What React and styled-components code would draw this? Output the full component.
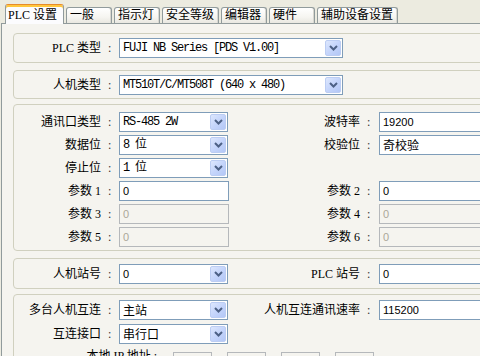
import React from "react";
import styled, { createGlobalStyle } from "styled-components";

const GlobalStyle = createGlobalStyle`
  html, body { margin: 0; padding: 0; background: #ECE9D8; }
  * { box-sizing: border-box; }
`;

const LABEL_FONT = `"Liberation Serif", "Noto Sans CJK SC", serif`;
const MONO_FONT = `"Liberation Mono", "Noto Sans CJK SC", monospace`;
const SANS_FONT = `"Liberation Sans", "Noto Sans CJK SC", sans-serif`;
const CJK_FONT = `"Noto Sans CJK SC", sans-serif`;

const Window = styled.div`
  width: 480px;
  height: 356px;
  overflow: hidden;
  background: #ecebe0;
  font-family: ${LABEL_FONT};
  font-size: 12px;
  color: #000;
  display: flex;
  flex-direction: column;
`;

const TabStrip = styled.div`
  display: flex;
  align-items: flex-end;
  height: 23px;
  padding-left: 5px;
  flex-shrink: 0;
`;

const Tab = styled.div`
  position: relative;
  z-index: ${(p) => (p.$active ? 2 : 1)};
  height: ${(p) => (p.$active ? "20px" : "16px")};
  margin-bottom: ${(p) => (p.$active ? "-1px" : "0")};
  margin-left: ${(p) => (p.$active ? "0" : "2px")};
  min-width: ${(p) => (p.$active ? "59px" : "46px")};
  padding: 0 4px 0 ${(p) => (p.$active ? "2px" : "3px")};
  border: 1px solid #919b9c;
  border-bottom: none;
  border-radius: 3px 3px 0 0;
  border-top-color: ${(p) => (p.$active ? "#e68b2c" : "#919b9c")};
  box-shadow: ${(p) => (p.$active ? "inset 0 2px 0 #ffc73c" : "inset -1px 0 0 #d8d7d0")};
  background: ${(p) =>
    p.$active ? "#fcfcfe" : "linear-gradient(#ffffff, #f6f5f1 60%, #e9e8e1)"};
  line-height: ${(p) => (p.$active ? "20px" : "15px")};
  white-space: nowrap;
  &:first-child {
    margin-left: 0;
  }
`;

const Pane = styled.div`
  flex: 1;
  margin-left: 1px;
  border-top: 1px solid #919b9c;
  border-left: 1px solid #919b9c;
  background: #f5f4ef;
  display: flex;
  flex-direction: column;
  padding: 9px 0 0 11px;
`;

const Group = styled.div`
  width: 520px;
  flex-shrink: 0;
  margin-top: ${(p) => p.$mt || 0}px;
  border: 1px solid #d0d0bf;
  border-radius: 4px;
  padding: ${(p) => p.$pad || "4px 0"};
  display: flex;
  flex-direction: column;
  gap: ${(p) => p.$gap || 3}px;
`;

const Row = styled.div`
  display: grid;
  grid-template-columns: 87px 18px 110px 131px 19px 130px;
  height: 20px;
  align-items: center;
`;

const Label = styled.span`
  text-align: right;
  white-space: nowrap;
  line-height: 20px;
`;

const Colon = styled.span`
  padding-left: 7px;
  color: #333;
  line-height: 20px;
`;

const valueFont = {
  mono: `font-family: ${MONO_FONT}; font-size: 12px; letter-spacing: -1.2px;`,
  sans: `font-family: ${SANS_FONT}; font-size: 11px;`,
  cjk: `font-family: ${CJK_FONT}; font-size: 12px;`,
};

const SelectBox = styled.div`
  width: ${(p) => p.$w || 109}px;
  height: 20px;
  background: #fff;
  border: 1px solid #7f9db9;
  display: flex;
  padding: 1px;
`;

const Value = styled.span`
  flex: 1;
  padding-left: 2px;
  line-height: 16px;
  white-space: nowrap;
  overflow: hidden;
  ${(p) => valueFont[p.$kind || "mono"]}
`;

const ArrowButton = styled.span`
  width: 16px;
  flex-shrink: 0;
  display: flex;
  align-items: center;
  justify-content: center;
  border: 1px solid #bccdf3;
  border-radius: 2px;
  background: linear-gradient(135deg, #dde7fd 0%, #c5d5fb 50%, #b3c7f6 100%);
`;

const InputBox = styled.div`
  width: ${(p) => p.$w || 110}px;
  height: 20px;
  border: 1px solid ${(p) => (p.$disabled ? "#b5b8bb" : "#7f9db9")};
  background: ${(p) => (p.$disabled ? "#f5f4ef" : "#fff")};
  color: ${(p) => (p.$disabled ? "#aca899" : "#000")};
  font-family: ${SANS_FONT};
  font-size: 11px;
  line-height: 18px;
  padding-left: 3px;
`;

const IpRow = styled.div`
  display: grid;
  grid-template-columns: 144px 39px 39px 39px 39px;
  column-gap: 15px;
  height: 20px;
  margin-top: 4px;
`;

const IpLabel = styled.span`
  text-align: right;
  padding-right: 1px;
  margin-top: -6px;
  line-height: 20px;
  white-space: nowrap;
`;

const IpBox = styled.div`
  border: 1px solid #b5b8bb;
  background: #f5f4ef;
  height: 20px;
`;

const Chevron = () => (
  <svg width="9" height="6" viewBox="0 0 9 6">
    <path d="M1 1 L4.5 4.5 L8 1" fill="none" stroke="#4d6185" strokeWidth="2" />
  </svg>
);

const Select = ({ value, kind, w }) => (
  <SelectBox $w={w}>
    <Value $kind={kind}>{value}</Value>
    <ArrowButton>
      <Chevron />
    </ArrowButton>
  </SelectBox>
);

const Field = ({ label, children }) => (
  <>
    <Label>{label}</Label>
    <Colon>:</Colon>
    {children}
  </>
);

const tabs = ["PLC 设置", "一般", "指示灯", "安全等级", "编辑器", "硬件", "辅助设备设置"];

const App = () => (
  <Window>
    <GlobalStyle />
    <TabStrip>
      {tabs.map((t, i) => (
        <Tab key={t} $active={i === 0}>
          {t}
        </Tab>
      ))}
    </TabStrip>
    <Pane>
      <Group>
        <Row>
          <Field label="PLC 类型">
            <Select w={224} value="FUJI NB Series [PDS V1.00]" />
          </Field>
        </Row>
      </Group>
      <Group $mt={7} $pad="4px 0 3px">
        <Row>
          <Field label="人机类型">
            <Select w={224} value="MT510T/C/MT508T (640 x 480)" />
          </Field>
        </Row>
      </Group>
      <Group $mt={5} $pad="7px 0 3px">
        <Row>
          <Field label="通讯口类型">
            <Select value="RS-485 2W" />
          </Field>
          <Field label="波特率">
            <Select w={120} kind="sans" value="19200" />
          </Field>
        </Row>
        <Row>
          <Field label="数据位">
            <Select value="8 位" />
          </Field>
          <Field label="校验位">
            <Select w={120} kind="cjk" value="奇校验" />
          </Field>
        </Row>
        <Row>
          <Field label="停止位">
            <Select value="1 位" />
          </Field>
        </Row>
        <Row>
          <Field label="参数 1">
            <InputBox>0</InputBox>
          </Field>
          <Field label="参数 2">
            <InputBox $w={120}>0</InputBox>
          </Field>
        </Row>
        <Row>
          <Field label="参数 3">
            <InputBox $disabled>0</InputBox>
          </Field>
          <Field label="参数 4">
            <InputBox $w={120} $disabled>0</InputBox>
          </Field>
        </Row>
        <Row>
          <Field label="参数 5">
            <InputBox $disabled>0</InputBox>
          </Field>
          <Field label="参数 6">
            <InputBox $w={120} $disabled>0</InputBox>
          </Field>
        </Row>
      </Group>
      <Group $mt={7} $pad="5px 0 4px">
        <Row>
          <Field label="人机站号">
            <Select kind="sans" value="0" />
          </Field>
          <Field label="PLC 站号">
            <Select w={120} kind="sans" value="0" />
          </Field>
        </Row>
      </Group>
      <Group $mt={5} $pad="5px 0 4px" $gap={4}>
        <Row>
          <Field label="多台人机互连">
            <Select kind="cjk" value="主站" />
          </Field>
          <Field label="人机互连通讯速率">
            <Select w={120} kind="sans" value="115200" />
          </Field>
        </Row>
        <Row>
          <Field label="互连接口">
            <Select kind="cjk" value="串行口" />
          </Field>
        </Row>
        <IpRow>
          <IpLabel>本地 IP 地址 :</IpLabel>
          <IpBox />
          <IpBox />
          <IpBox />
          <IpBox />
        </IpRow>
      </Group>
    </Pane>
  </Window>
);

export default App;
